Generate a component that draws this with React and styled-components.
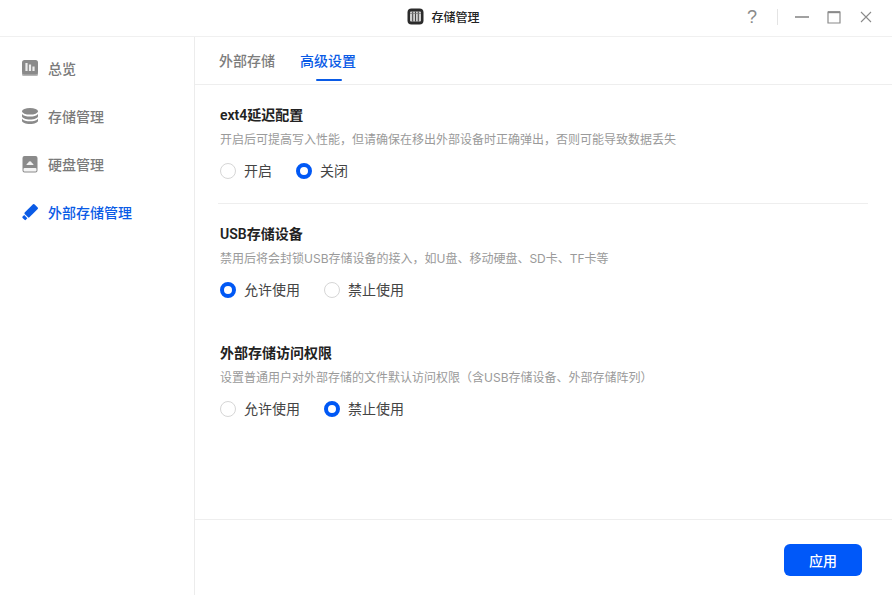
import React from "react";
import styled, { createGlobalStyle } from "styled-components";

const Global = createGlobalStyle`
  html, body { margin: 0; padding: 0; background: #fff; }
  body { font-family: "Inter", "Noto Sans CJK SC", sans-serif; }
  * { box-sizing: border-box; }
`;
const Win = styled.div`
  width: 892px; height: 595px; display: flex; flex-direction: column; background: #fff; overflow: hidden;
`;
const TitleBar = styled.header`
  height: 37px; flex: none; position: relative; display: flex; align-items: center; justify-content: center;
  border-bottom: 1px solid #f0f0f0; padding: 0 5px 3px 0;
`;
const TitleGroup = styled.div`
  display: flex; align-items: center; gap: 7px; font-size: 12px; font-weight: 500; color: #222;
`;
const WinControls = styled.div`
  position: absolute; right: 18px; top: 9px; display: flex; align-items: center; color: #888;
`;
const CtrlIcon = styled.svg`
  width: 16px; height: 16px; display: block; margin-left: ${p => p.$ml || 0}px;
`;
const Divider = styled.span`
  width: 1px; height: 16px; background: #e4e4e4; margin-left: 19px;
`;
const Help = styled.span`
  font: 400 18px/16px "Liberation Sans", sans-serif; color: #8a8a8a; width: 12px; text-align: center;
`;
const Body = styled.div`
  flex: 1; display: flex; min-height: 0;
`;
const Side = styled.nav`
  width: 195px; flex: none; border-right: 1px solid #ececec; padding: 7px 0 0 21px; display: flex; flex-direction: column;
`;
const NavItem = styled.div`
  height: 48px; display: flex; align-items: center; gap: 9px; font-size: 14px; font-weight: 500;
  color: ${p => (p.$active ? "#0a5be6" : "#7a7a7a")};
  svg { width: 18px; height: 18px; flex: none; display: block; }
`;
const Main = styled.main`
  flex: 1; min-width: 0; display: flex; flex-direction: column;
`;
const Tabs = styled.div`
  height: 48px; flex: none; border-bottom: 1px solid #eeeeee; display: flex; padding-left: 24px; gap: 25px;
`;
const Tab = styled.div`
  position: relative; font-size: 14px; font-weight: 500; line-height: 20px; padding-top: 14px;
  color: ${p => (p.$active ? "#0a5be6" : "#7d7d7d")};
  ${p => p.$active && `&::after { content: ""; position: absolute; left: 16px; right: 14px; bottom: 3px; height: 2px; background: #0a5be6; border-radius: 1px; }`}
`;
const Content = styled.div`
  flex: 1; padding: 0 24px 0 23px; min-height: 0;
`;
const Section = styled.section`
  height: ${p => p.$h}px; padding: ${p => p.$pt}px 0 0 2px;
  ${p => p.$line && "border-bottom: 1px solid #eeeeee;"}
`;
const Heading = styled.h3`
  margin: 0; font-family: "Roboto", "Noto Sans CJK SC", sans-serif; font-size: 14px; font-weight: 600; line-height: 20px; color: #222;
`;
const Desc = styled.p`
  margin: 6px 0 0; font-size: 12px; font-weight: 400; line-height: 18px; color: #9a9a9a;
`;
const Radios = styled.div`
  display: flex; margin-top: 12px; height: 20px; align-items: center; gap: 24px;
`;
const Radio = styled.label`
  display: flex; align-items: center; gap: 8px; font-size: 14px; line-height: 20px; color: #444;
`;
const Dot = styled.span`
  width: 16px; height: 16px; border-radius: 50%; background: #fff; flex: none;
  border: ${p => (p.$on ? "4.5px solid #0058f5" : "1px solid #d6d6d6")};
`;
const Footer = styled.footer`
  height: 76px; flex: none; border-top: 1px solid #eeeeee; display: flex; justify-content: flex-end; padding: 24px 30px 0 0;
`;
const Apply = styled.button`
  width: 78px; height: 32px; border: 0; border-radius: 6px; background: #0058f9; color: #fff;
  font-family: inherit; font-size: 14px; font-weight: 500; padding: 0;
`;

const Group = ({ title, desc, opts, on, h, pt, line }) => (
  <Section $h={h} $pt={pt} $line={line}>
    <Heading>{title}</Heading>
    <Desc>{desc}</Desc>
    <Radios>
      {opts.map((o, i) => (
        <Radio key={o}><Dot $on={i === on} />{o}</Radio>
      ))}
    </Radios>
  </Section>
);

export default function App() {
  return (
    <Win>
      <Global />
      <TitleBar>
        <TitleGroup>
          <svg width="17" height="17" viewBox="0 0 17 17">
            <rect x=".5" y=".5" width="16" height="16" rx="4" fill="#2b2b2b" />
            <rect x="3" y="3.500" width="11" height="10" rx="1" fill="#cfcfcf" />
            <path d="M5.700 3.500v10M8.500 3.500v10M11.300 3.500v10" stroke="#444" strokeWidth="1" />
            <path d="M3 5.500h11" stroke="#777" strokeWidth=".7" />
          </svg>
          存储管理
        </TitleGroup>
        <WinControls>
          <Help>?</Help>
          <Divider />
          <CtrlIcon $ml={16} viewBox="0 0 16 16"><path d="M1 8h14" stroke="#8a8a8a" strokeWidth="1.6" fill="none" /></CtrlIcon>
          <CtrlIcon $ml={16} viewBox="0 0 16 16"><path d="M2 3h12v11H2z" stroke="#8a8a8a" strokeWidth="1.2" fill="none" /><path d="M2 3.2h12" stroke="#8a8a8a" strokeWidth="2" /></CtrlIcon>
          <CtrlIcon $ml={16} viewBox="0 0 16 16"><path d="M3 3l10 10M13 3L3 13" stroke="#8a8a8a" strokeWidth="1.1" fill="none" /></CtrlIcon>
        </WinControls>
      </TitleBar>
      <Body>
        <Side>
          <NavItem>
            <svg viewBox="0 0 18 18">
              <path d="M1 14h16v1.500A1.500 1.500 0 0 1 15.500 17h-13A1.500 1.500 0 0 1 1 15.500z" fill="#b5b5b5" />
              <rect x="1" y="1" width="16" height="14.500" rx="2.500" fill="#8a8a8a" />
              <path d="M5.500 4v8M9 5.500V12M12.500 7.500V12" stroke="#ececec" strokeWidth="2.200" />
            </svg>
            总览
          </NavItem>
          <NavItem>
            <svg viewBox="0 0 18 18" fill="#8a8a8a">
              <ellipse cx="9" cy="4.300" rx="8" ry="3.300" />
              <path d="M1 7c1.400 1.800 4.600 2.600 8 2.600S15.600 8.800 17 7v2.300c0 1.800-3.600 3.200-8 3.200S1 11.100 1 9.300z" />
              <path d="M1 11.700c1.400 1.800 4.600 2.600 8 2.600s6.600-.8 8-2.600v2.100c0 1.800-3.600 3.200-8 3.200s-8-1.400-8-3.200z" />
            </svg>
            存储管理
          </NavItem>
          <NavItem>
            <svg viewBox="0 0 18 18">
              <path d="M3.500 1h11A2 2 0 0 1 16.500 3v12.500a2 2 0 0 1-2 2h-11a2 2 0 0 1-2-2V3a2 2 0 0 1 2-2z" fill="#8a8a8a" />
              <path d="M5.500 10c0-1.100.8-1.700 1.500-1.700.3-1.300 1.100-2.100 2-2.100s1.700.8 2 2.100c.7 0 1.500.6 1.500 1.700z" fill="#f2f2f2" />
              <rect x="2.500" y="13" width="13" height="3.500" rx="1" fill="#f4f4f4" />
            </svg>
            硬盘管理
          </NavItem>
          <NavItem $active>
            <svg viewBox="0 0 18 18" fill="#0a5be6">
              <path d="M12 1.300a1 1 0 0 1 1.400 0l3.300 3.300a1 1 0 0 1 0 1.400l-8.300 8.300a1 1 0 0 1-1.400 0L3.700 11a1 1 0 0 1 0-1.400z" />
              <path d="M3.200 12l3.200 3.200-1.500 1.600a1 1 0 0 1-1.400 0l-1.900-1.900a1 1 0 0 1 0-1.400z" />
            </svg>
            外部存储管理
          </NavItem>
        </Side>
        <Main>
          <Tabs>
            <Tab>外部存储</Tab>
            <Tab $active>高级设置</Tab>
          </Tabs>
          <Content>
            <Group h={119} pt={20} line title="ext4延迟配置" desc="开启后可提高写入性能，但请确保在移出外部设备时正确弹出，否则可能导致数据丢失" opts={["开启", "关闭"]} on={1} />
            <Group h={119} pt={20} title="USB存储设备" desc="禁用后将会封锁USB存储设备的接入，如U盘、移动硬盘、SD卡、TF卡等" opts={["允许使用", "禁止使用"]} on={0} />
            <Group h={119} pt={20} title="外部存储访问权限" desc="设置普通用户对外部存储的文件默认访问权限（含USB存储设备、外部存储阵列）" opts={["允许使用", "禁止使用"]} on={1} />
          </Content>
          <Footer><Apply>应用</Apply></Footer>
        </Main>
      </Body>
    </Win>
  );
}
